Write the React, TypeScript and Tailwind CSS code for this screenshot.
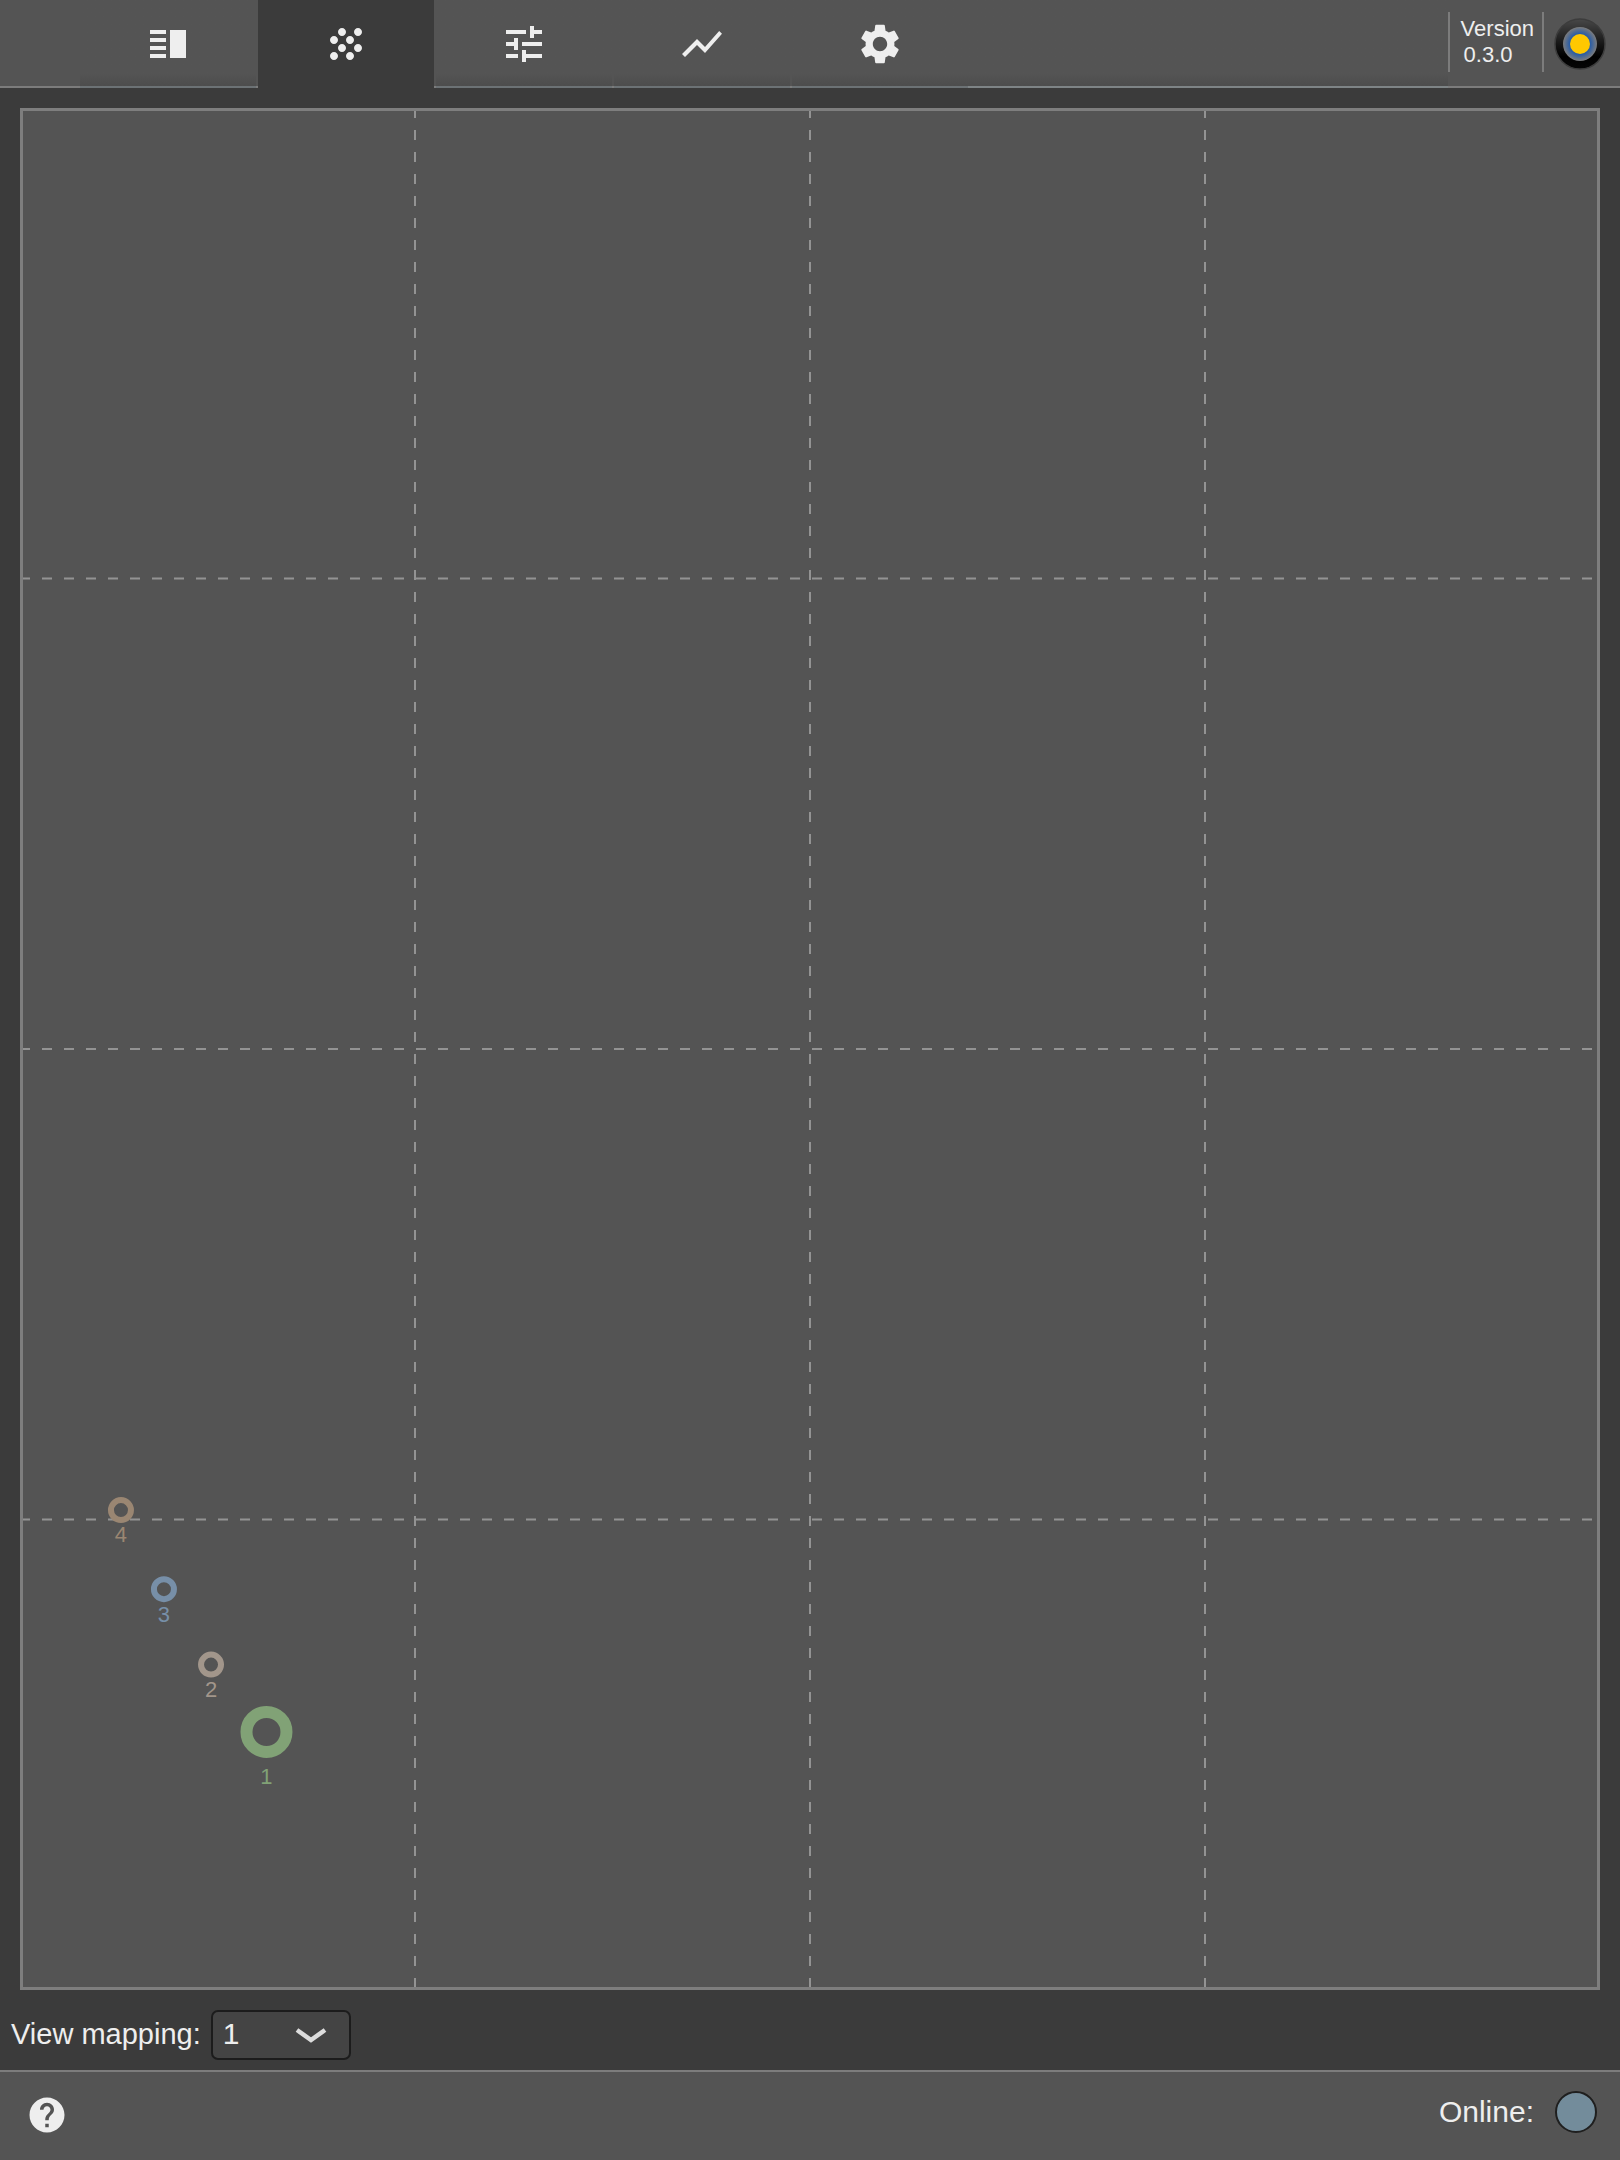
import { useState } from "react";
import { MdVerticalSplit, MdGrain, MdTune, MdShowChart, MdSettings, MdHelp } from "react-icons/md";

const tabs = [
  { label: "Layout", Icon: MdVerticalSplit },
  { label: "Sources", Icon: MdGrain },
  { label: "Parameters", Icon: MdTune },
  { label: "Statistics", Icon: MdShowChart },
  { label: "Settings", Icon: MdSettings },
];

const quarters = ["25%", "50%", "75%"];

const sources = [
  { id: 4, x: "6.39%", y: "74.5%", r: 10, stroke: 6, dy: 32, color: "#9a8672" },
  { id: 3, x: "9.11%", y: "78.7%", r: 10, stroke: 6, dy: 33, color: "#778fa8" },
  { id: 2, x: "12.09%", y: "82.71%", r: 10, stroke: 6, dy: 32, color: "#a2968b" },
  { id: 1, x: "15.6%", y: "86.29%", r: 20, stroke: 12, dy: 52, color: "#81a276" },
];

function Logo() {
  return (
    <svg className="size-[52px]" viewBox="0 0 52 52" aria-hidden="true">
      <defs>
        <linearGradient id="rim" x1="0" y1="0" x2="0" y2="1">
          <stop offset="0" stopColor="#484848" />
          <stop offset="0.5" stopColor="#161616" />
          <stop offset="0.75" stopColor="#000000" />
          <stop offset="1" stopColor="#060606" />
        </linearGradient>
        <radialGradient id="iris">
          <stop offset="0.6" stopColor="#285ca6" />
          <stop offset="1" stopColor="#7c7c7c" />
        </radialGradient>
      </defs>
      <circle cx="26" cy="26" r="25" fill="url(#rim)" stroke="#3c3c3c" strokeWidth="1.5" />
      <circle cx="26" cy="26" r="17" fill="url(#iris)" />
      <circle cx="26" cy="26" r="10" fill="#ffc800" />
    </svg>
  );
}

function Header() {
  const [active, setActive] = useState("Sources");
  return (
    <header className="flex h-[88px] border-b-2 border-[#7c7c7c] bg-[#545454]">
      <nav className="-mb-0.5 ml-20 flex gap-0.5">
        {tabs.map(({ label, Icon }) => (
          <button
            key={label}
            type="button"
            aria-label={label}
            onClick={() => setActive(label)}
            className={
              active === label
                ? "flex w-44 items-center justify-center bg-[#3b3b3b]"
                : "flex w-44 items-center justify-center border-b-2 border-[#6c7275] bg-linear-to-t from-[#4d4d4d] to-[#545454] to-15% pt-0.5"
            }
          >
            <Icon className="size-12" />
          </button>
        ))}
      </nav>
      <div className="-mb-0.5 flex-1 border-b-2 border-[#7e8486] bg-linear-to-t from-[#4d4d4d] to-[#545454] to-15%" />
      <div className="mt-3 h-[60px] border-x-2 border-[#7c7c7c] pt-1 pr-2 pl-[11px] text-[22px] leading-[26px]">
        <div>Version</div>
        <div className="pl-[3px]">0.3.0</div>
      </div>
      <div className="mt-[18px] mr-3.5 ml-2.5">
        <Logo />
      </div>
    </header>
  );
}

function SpaceView() {
  return (
    <main className="relative m-5 mb-0 flex-1 bg-[#545454]">
      <svg className="absolute inset-0 size-full" role="img" aria-label="Source positions">
        <g stroke="#939393" strokeWidth="2" strokeDasharray="10 12">
          {quarters.map((q) => (
            <line key={"v" + q} x1={q} x2={q} y1="0" y2="100%" />
          ))}
          {quarters.map((q) => (
            <line key={"h" + q} x1="0" x2="100%" y1={q} y2={q} />
          ))}
        </g>
        {sources.map((s) => (
          <g key={s.id}>
            <circle cx={s.x} cy={s.y} r={s.r} fill="none" stroke={s.color} strokeWidth={s.stroke} />
            <text x={s.x} y={s.y} dy={s.dy} textAnchor="middle" fontSize="22" fill={s.color}>
              {s.id}
            </text>
          </g>
        ))}
      </svg>
      <div className="absolute inset-0 border-3 border-[#7e7e7e]" />
    </main>
  );
}

export default function App() {
  return (
    <div className="flex min-h-screen flex-col bg-[#3b3b3b] font-['Liberation_Sans',Arial,sans-serif] text-[30px] leading-[34px] text-[#eeeeee]">
      <Header />
      <SpaceView />
      <div className="mt-5 mb-2.5 flex h-[50px] items-center gap-2.5 pl-[11px]">
        <label htmlFor="mapping" className="pb-0.5 text-[29px]">
          View mapping:
        </label>
        <div className="relative h-full w-[140px]">
          <select
            id="mapping"
            defaultValue="1"
            className="size-full appearance-none rounded-[7px] border-2 border-[#1c1c1c] bg-[#444444] pb-0.5 pl-2.5"
          >
            <option>1</option>
            <option>2</option>
            <option>3</option>
            <option>4</option>
          </select>
          <svg
            className="pointer-events-none absolute top-[17px] right-6 h-4 w-8"
            viewBox="0 0 32 16"
            fill="none"
            stroke="#dddddd"
            strokeWidth="4.5"
            aria-hidden="true"
          >
            <path d="M2 3 16 13 30 3" />
          </svg>
        </div>
      </div>
      <footer className="flex h-[90px] items-center justify-between border-t-2 border-[#7c7c7c] bg-[#545454] pr-[23px] pb-1 pl-[26px]">
        <button type="button" aria-label="Help" className="pt-0.5">
          <MdHelp className="size-[42px]" />
        </button>
        <div className="flex items-center gap-[21px] pb-1">
          <span>Online:</span>
          <span className="size-[42px] rounded-full border-2 border-[#1f1f1f] bg-[#738c9b]" />
        </div>
      </footer>
    </div>
  );
}
